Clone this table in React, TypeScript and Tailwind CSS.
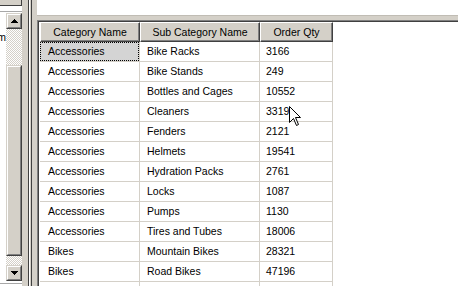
import React from "react";

const rows: [string, string, string][] = [
  ["Accessories", "Bike Racks", "3166"],
  ["Accessories", "Bike Stands", "249"],
  ["Accessories", "Bottles and Cages", "10552"],
  ["Accessories", "Cleaners", "3319"],
  ["Accessories", "Fenders", "2121"],
  ["Accessories", "Helmets", "19541"],
  ["Accessories", "Hydration Packs", "2761"],
  ["Accessories", "Locks", "1087"],
  ["Accessories", "Pumps", "1130"],
  ["Accessories", "Tires and Tubes", "18006"],
  ["Bikes", "Mountain Bikes", "28321"],
  ["Bikes", "Road Bikes", "47196"],
  ["", "", ""],
];

function Arrow({ dir }: { dir: "up" | "down" }) {
  const r =
    dir === "up"
      ? [
          [3, 0, 1],
          [2, 1, 3],
          [1, 2, 5],
          [0, 3, 7],
        ]
      : [
          [0, 0, 7],
          [1, 1, 5],
          [2, 2, 3],
          [3, 3, 1],
        ];
  return (
    <svg width="7" height="4" viewBox="0 0 7 4" shapeRendering="crispEdges" className="block">
      {r.map(([x, y, w]) => (
        <rect key={y} x={x} y={y} width={w} height={1} fill="#000" />
      ))}
    </svg>
  );
}

// Classic raised 3D face used by scroll buttons and the thumb
function Raised({ className, children }: { className?: string; children?: React.ReactNode }) {
  return (
    <div
      className={
        "shrink-0 border border-t-[#d4d0c8] border-l-[#d4d0c8] border-r-[#404040] border-b-[#404040] " +
        (className ?? "")
      }
    >
      <div className="h-full border border-t-white border-l-white border-r-[#808080] border-b-[#808080] bg-[#d4d0c8] flex items-center justify-center">
        {children}
      </div>
    </div>
  );
}

function Track({ className }: { className: string }) {
  return (
    <div
      className={
        "shrink-0 bg-[image:repeating-conic-gradient(#d4d0c8_0%_25%,#ffffff_0%_50%)] bg-[length:2px_2px] " +
        className
      }
    />
  );
}

function ScrollBar() {
  return (
    <div className="w-[16px] flex flex-col">
      <Raised className="h-[16px]">
        <Arrow dir="up" />
      </Raised>
      <Track className="h-[36px]" />
      <Raised className="flex-1 min-h-0" />
      <Track className="h-[9px]" />
      <Raised className="h-[16px]">
        <Arrow dir="down" />
      </Raised>
    </div>
  );
}

function HeaderCell({ w, label }: { w: string; label: string }) {
  return (
    <div
      className={
        w +
        " h-[20px] shrink-0 bg-[#d4d0c8] border border-t-white border-l-white border-r-[#404040] border-b-[#404040] shadow-[inset_-1px_-1px_0_#808080] flex items-center justify-center leading-[17px] whitespace-nowrap"
      }
    >
      {label}
    </div>
  );
}

function Cursor() {
  return (
    <svg width="13" height="21" viewBox="0 0 13 21" className="absolute left-[289px] top-[106px]">
      <polygon
        points="0.5,0.5 0.5,16.5 4.5,12.5 7.5,19.5 9.5,18.5 6.5,11.5 11.5,11.5"
        fill="#fff"
        stroke="#000"
        strokeWidth="1"
      />
    </svg>
  );
}

export default function App() {
  return (
    <div
      className="relative w-[458px] h-[286px] overflow-hidden flex bg-white text-black text-[10.5px]"
      style={{ fontFamily: '"Liberation Sans", Arial, sans-serif' }}
    >
      {/* left pane with its scroll bar */}
      <div className="w-[22px] shrink-0 flex flex-col">
        <div className="h-[6px] shrink-0 bg-[#d4d0c8] border-b border-r border-[#404040]" />
        <div className="h-[5px] shrink-0 bg-white" />
        <div className="h-[1px] shrink-0 bg-[#a8a8a8]" />
        <div className="h-[1px] shrink-0 bg-white" />
        <div className="flex-1 min-h-0 flex">
          <div className="w-[6px] bg-white overflow-hidden flex justify-end pt-[18px]">
            <span className="leading-[13px] whitespace-nowrap">Item</span>
          </div>
          <ScrollBar />
        </div>
        <div className="h-[5px] shrink-0 bg-white flex flex-col">
          <div className="h-[2px]" />
          <div className="h-[1px] bg-[#a8a8a8]" />
        </div>
      </div>

      {/* splitter */}
      <div className="w-[15px] shrink-0 flex bg-[#d4d0c8]">
        <div className="w-[6px]" />
        <div className="w-[1px] bg-[#404040]" />
        <div className="w-[1px] bg-white" />
        <div className="w-[1px]" />
        <div className="w-[1px] bg-[#404040]" />
        <div className="w-[5px]" />
      </div>

      {/* right pane */}
      <div className="flex-1 flex flex-col min-w-0">
        <div className="h-[16px] shrink-0 bg-white border-b border-[#c0bcb4]" />
        <div className="h-[4px] shrink-0 bg-[#d4d0c8]" />
        <div className="flex-1 min-h-0 overflow-hidden border-t border-l border-[#808080]">
          <div className="h-full border-t border-l border-[#404040] bg-white pl-[1px]">
            <div className="flex">
              <HeaderCell w="w-[100px]" label="Category Name" />
              <HeaderCell w="w-[120px]" label="Sub Category Name" />
              <HeaderCell w="w-[73px]" label="Order Qty" />
            </div>
            {rows.map((r, i) => (
              <div key={i} className="flex h-[20px] leading-[19px] whitespace-nowrap">
                {i === 0 ? (
                  <div className="w-[100px] shrink-0 border-b border-r border-[#d4d0c8]">
                    <div className="h-full bg-[#d4d4d4] border border-dotted border-black pl-[7px] leading-[17px]">
                      {r[0]}
                    </div>
                  </div>
                ) : (
                  <div className="w-[100px] shrink-0 border-b border-r border-[#d4d0c8] pl-[8px]">{r[0]}</div>
                )}
                <div className="w-[120px] shrink-0 border-b border-r border-[#d4d0c8] pl-[7px]">{r[1]}</div>
                <div className="w-[73px] shrink-0 border-b border-r border-[#d4d0c8] pl-[6px]">{r[2]}</div>
              </div>
            ))}
          </div>
        </div>
      </div>

      <Cursor />
    </div>
  );
}
